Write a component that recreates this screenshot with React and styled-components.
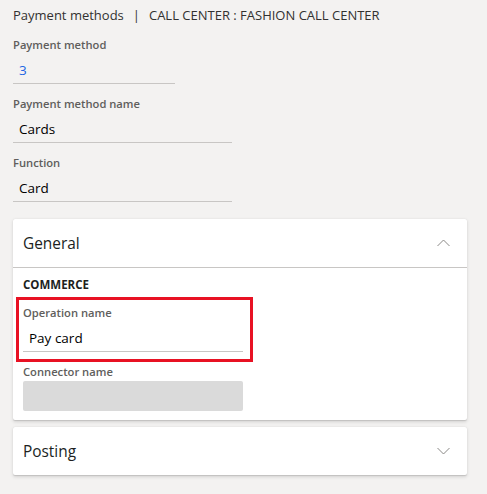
import styled, { createGlobalStyle } from "styled-components";

const GlobalStyle = createGlobalStyle`
  html, body {
    margin: 0;
    padding: 0;
    background: #f3f2f1;
  }
  body {
    font-family: "Segoe UI", "Open Sans", "Noto Sans", sans-serif;
    color: #323130;
  }
`;

const Pagina = styled.div`
  width: 487px;
  height: 494px;
  box-sizing: border-box;
  padding: 5px 20px 0 13px;
  overflow: hidden;
`;

const Titulo = styled.div`
  font-size: 13px;
  line-height: 20px;
  color: #323130;
  white-space: nowrap;
  span {
    margin: 0 9px 0 9px;
  }
`;

const Formulario = styled.div`
  display: flex;
  flex-direction: column;
  gap: 12px;
  margin-top: 12px;
`;

const Campo = styled.div`
  display: flex;
  flex-direction: column;
  width: ${(props) => props.largura || 219}px;
  position: relative;
`;

const Rotulo = styled.label`
  font-size: 11.2px;
  font-weight: 600;
  line-height: 16px;
  color: #605e5c;
`;

const Entrada = styled.div`
  box-sizing: border-box;
  height: 31px;
  padding: 4px 6px 0;
  line-height: 26px;
  font-size: 13.5px;
  color: ${(props) => (props.link ? "#2266e3" : "#000")};
  border-bottom: 1px solid #c8c6c4;
`;

const EntradaBloqueada = styled.div`
  height: 30px;
  margin-top: 1px;
  background: #dadada;
  border-radius: 2px;
`;

const Destaque = styled.div`
  position: absolute;
  top: -8px;
  left: -7px;
  right: -10px;
  bottom: -10px;
  border: 3px solid #e81123;
  pointer-events: none;
`;

const Cartao = styled.section`
  background: #fff;
  border-radius: 2px;
  box-shadow: 0 1.6px 3.6px rgba(0, 0, 0, 0.13), 0 0.3px 0.9px rgba(0, 0, 0, 0.11);
  margin-top: ${(props) => props.espaco || 0}px;
`;

const CabecalhoCartao = styled.div`
  display: flex;
  justify-content: space-between;
  align-items: center;
  height: 48px;
  padding: 0 17px 0 10px;
  font-size: 15.4px;
  color: #201f1e;
  border-bottom: ${(props) => (props.aberto ? "1px solid #c8c6c4" : "none")};
`;

const CorpoCartao = styled.div`
  display: flex;
  flex-direction: column;
  gap: 12px;
  padding: 9px 10px 9px;
`;

const Secao = styled.div`
  font-size: 11.5px;
  font-weight: 700;
  line-height: 16px;
  color: #201f1e;
`;

const Seta = ({ cima }) => (
  <svg width="13" height="8" viewBox="0 0 13 8">
    <polyline
      points={cima ? "0.5,7 6.5,1 12.5,7" : "0.5,1 6.5,7 12.5,1"}
      fill="none"
      stroke="#8a8886"
      strokeWidth="1"
    />
  </svg>
);

const App = () => {
  return (
    <>
      <GlobalStyle />
      <Pagina>
        <Titulo>
          Payment methods<span>|</span>CALL CENTER : FASHION CALL CENTER
        </Titulo>
        <Formulario>
          <Campo largura={162}>
            <Rotulo>Payment method</Rotulo>
            <Entrada link>3</Entrada>
          </Campo>
          <Campo>
            <Rotulo>Payment method name</Rotulo>
            <Entrada>Cards</Entrada>
          </Campo>
          <Campo>
            <Rotulo>Function</Rotulo>
            <Entrada>Card</Entrada>
          </Campo>
        </Formulario>

        <Cartao espaco={17}>
          <CabecalhoCartao aberto>
            General
            <Seta cima />
          </CabecalhoCartao>
          <CorpoCartao>
            <Secao>COMMERCE</Secao>
            <Campo largura={220}>
              <Rotulo>Operation name</Rotulo>
              <Entrada>Pay card</Entrada>
              <Destaque />
            </Campo>
            <Campo largura={220}>
              <Rotulo>Connector name</Rotulo>
              <EntradaBloqueada />
            </Campo>
          </CorpoCartao>
        </Cartao>

        <Cartao espaco={7}>
          <CabecalhoCartao>
            Posting
            <Seta />
          </CabecalhoCartao>
        </Cartao>
      </Pagina>
    </>
  );
};

export default App;
